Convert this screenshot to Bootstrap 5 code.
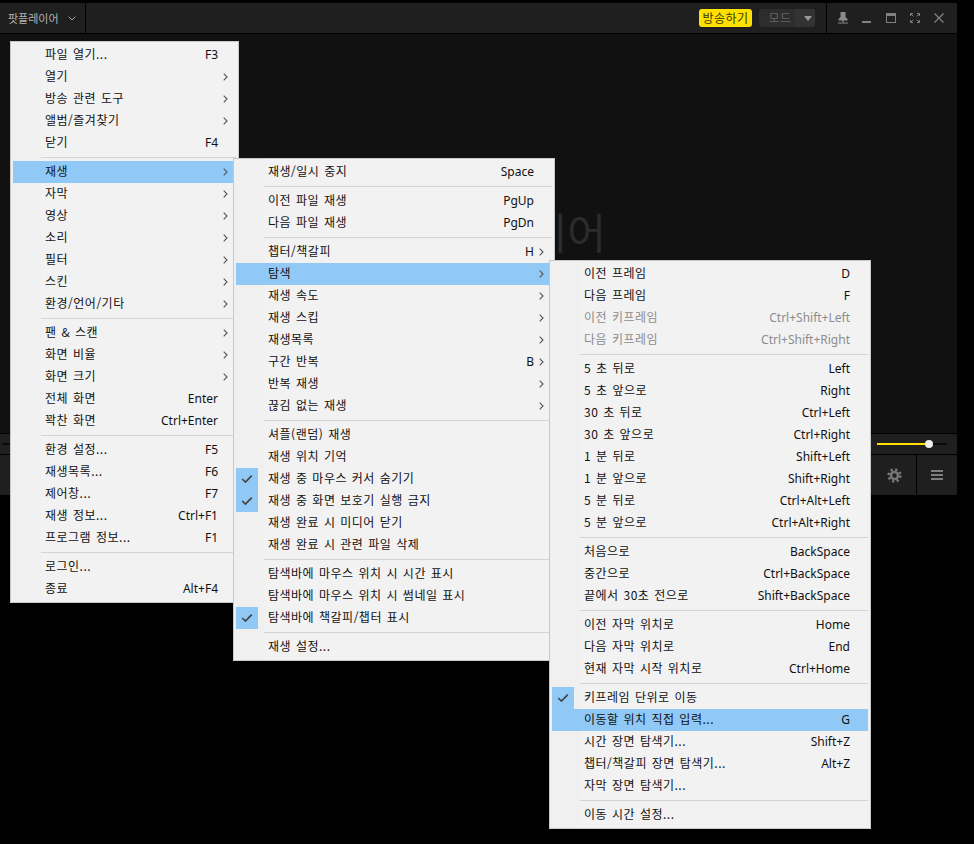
<!doctype html>
<html lang="ko">
<head>
<meta charset="utf-8">
<title>팟플레이어</title>
<link href="https://cdn.jsdelivr.net/npm/bootstrap@5.3.0/dist/css/bootstrap.min.css" rel="stylesheet">
<style>
html,body{background:#000;height:100%;overflow:hidden}
body{font-family:"Noto Sans CJK KR","Noto Sans",sans-serif;font-size:12px;padding-top:3px}
.pp-win{width:957px;background:#111}
.pp-title{height:31px;background:#1f1f1f;border-bottom:1px solid #000}
.pp-brand{width:86px;padding-left:8px;color:#b4b4b4;font-size:11px;border-right:1px solid #000;height:30px}
.pp-brand svg{margin-left:9px}
.pp-live{width:53px;height:18px;border-radius:3px;background:#ffe000;color:#3a3a00;letter-spacing:.4px;line-height:18px;text-align:center;margin-right:7px}
.pp-mode{width:56px;height:18px;border-radius:3px;overflow:hidden;background:#2d2d2d;color:#666;letter-spacing:.4px;margin-right:11px;line-height:18px}
.pp-mode-l{width:36px;text-align:center;padding-left:6px}
.pp-mode-r{width:20px;background:#333;height:18px;padding-left:5px}
.pp-wbtns{height:30px;border-left:1px solid #000;padding-left:4px;padding-right:6px}
.pp-wbtn{width:24px;height:30px;color:#808080}
.pp-stage{height:400px;background:#111;color:#2c2c2c;font-size:42px;line-height:60px;padding-top:167px;padding-right:351px;font-weight:400;border-bottom:1px solid #000}
.pp-seek{height:21px;background:#1f1f1f;border-bottom:1px solid #000}
.pp-track{height:2px;background:#0a0a0a}
.pp-seekline{margin-left:2px;margin-right:20px}
.pp-vol{width:70px;margin-right:10px;position:relative}
.pp-volfill{height:2px;background:#ffe000}
.pp-thumb{position:absolute;top:-3px;width:8px;height:8px;margin-left:-4px;border-radius:50%;background:#eee}
.pp-ctrl{height:40px;background:#1f1f1f}
.pp-cbtn{width:40px;height:40px;padding-right:4px}
.pp-cbtn+.pp-cbtn{width:41px;border-left:1px solid #000;padding-right:0}
.dropdown-menu.pp-menu{position:absolute;display:block;margin:0;min-width:0;padding:2px;border:1px solid #c8c8c8;border-radius:0;background:linear-gradient(to right,#f0f0f0 30px,#f2f2f2 30px);font-size:12px}
.pp-m1{left:10px;top:41px;width:229px;z-index:1010}
.pp-m2{left:233px;top:158px;width:322px;z-index:1020}
.pp-m3{left:549px;top:260px;width:322px;z-index:1030}
.dropdown-item.pp-row{height:22px;line-height:20px;padding:0 0 0 32px;color:#111;letter-spacing:.5px;word-spacing:1px;display:flex;align-items:flex-start;white-space:nowrap}
.dropdown-item.pp-row.pp-on{background:#90c8f6;color:#111}
.dropdown-item.pp-row.pp-off{color:#8c8c8c}
.dropdown-item.pp-row.pp-chk{padding-left:0}
.pp-tick{width:22px;height:22px;background:#90c8f6;margin-right:10px;display:flex;align-items:center;justify-content:center;flex:none}
.pp-key{margin-left:auto;margin-right:18px;font-family:"Noto Sans",sans-serif;letter-spacing:0;font-size:12px;line-height:22px}
.pp-sub{margin-left:auto;width:18px;height:22px;flex:none;display:flex;align-items:center;padding-left:5px}
.pp-key+.pp-sub{margin-left:-18px}
.dropdown-divider.pp-sep{margin:3px 0;height:1px;border-top:1px solid #d4d4d4;opacity:1;margin-left:28px}
</style>
</head>
<body>
<svg width="0" height="0" class="position-absolute">
<symbol id="pp-arr" viewBox="0 0 5 8"><path d="M.7.7 4 4 .7 7.3" fill="none" stroke="#555" stroke-width="1.1"/></symbol>
<symbol id="pp-ok" viewBox="0 0 12 10"><path d="M1.2 5 4.4 8 10.8 1.6" fill="none" stroke="#444" stroke-width="1.7"/></symbol>
</svg>

<div class="pp-win">
  <div class="pp-title d-flex align-items-center">
    <div class="pp-brand d-flex align-items-center">팟플레이어<svg width="8" height="5" viewBox="0 0 8 5"><path d="M.6.6 4 4 7.4.6" fill="none" stroke="#aaa"/></svg></div>
    <div class="ms-auto pp-live">방송하기</div>
    <div class="pp-mode d-flex">
      <div class="pp-mode-l">모드</div>
      <div class="pp-mode-r d-flex align-items-center justify-content-center"><svg width="8" height="5" viewBox="0 0 8 5"><path d="M0 0h8L4 5z" fill="#999"/></svg></div>
    </div>
    <div class="pp-wbtns d-flex">
      <div class="pp-wbtn d-flex align-items-center justify-content-center"><svg width="10" height="12" viewBox="0 0 10 12"><path d="M2.5 0h5v5l2 2v1.5H.5V7l2-2zM4.3 8.5h1.4V10H4.300zM0 10.500h10V11.500H0z" fill="#8a8a8a"/></svg></div>
      <div class="pp-wbtn d-flex align-items-center justify-content-center"><svg width="10" height="12" viewBox="0 0 10 12"><path d="M0 9h9v2H0z" fill="#808080"/></svg></div>
      <div class="pp-wbtn d-flex align-items-center justify-content-center"><svg width="10" height="10" viewBox="0 0 10 10"><path d="M0 0h10v10H0zM1 3v6h8V3z" fill="#808080" fill-rule="evenodd"/></svg></div>
      <div class="pp-wbtn d-flex align-items-center justify-content-center"><svg width="10" height="10" viewBox="0 0 10 10"><path d="M.5 3V.5H3M7 .5h2.500V3M9.500 7v2.500H7M3 9.500H.5V7M1 1l2.300 2.300M9 1 6.700 3.300M9 9 6.700 6.700M1 9l2.300-2.300" fill="none" stroke="#808080"/></svg></div>
      <div class="pp-wbtn d-flex align-items-center justify-content-center"><svg width="10" height="10" viewBox="0 0 10 10"><path d="M.5.5l9 9M9.500.5l-9 9" fill="none" stroke="#808080" stroke-width="1.300"/></svg></div>
    </div>
  </div>
  <div class="pp-stage d-flex justify-content-end align-items-start">팟플레이어</div>
  <div class="pp-seek d-flex align-items-center">
    <div class="pp-track pp-seekline flex-grow-1"></div>
    <div class="pp-track pp-vol"><div class="pp-volfill" style="width:74%"></div><div class="pp-thumb" style="left:74%"></div></div>
  </div>
  <div class="pp-ctrl d-flex justify-content-end">
    <div class="pp-cbtn d-flex align-items-center justify-content-center"><svg width="15" height="15" viewBox="0 0 15 15"><circle cx="7.500" cy="7.500" r="5.900" fill="none" stroke="#757575" stroke-width="2.600" stroke-dasharray="2.300 2.330"/><circle cx="7.500" cy="7.500" r="3.500" fill="none" stroke="#757575" stroke-width="2.600"/></svg></div>
    <div class="pp-cbtn d-flex align-items-center justify-content-center"><svg width="12" height="10" viewBox="0 0 12 10"><path d="M0 1h12M0 5h12M0 9h12" stroke="#ddd"/></svg></div>
  </div>
</div>

<ul class="dropdown-menu pp-menu pp-m1">
  <li><a class="dropdown-item pp-row">파일 열기...<span class="pp-key">F3</span></a></li>
  <li><a class="dropdown-item pp-row">열기<span class="pp-sub"><svg width="5" height="8"><use href="#pp-arr"/></svg></span></a></li>
  <li><a class="dropdown-item pp-row">방송 관련 도구<span class="pp-sub"><svg width="5" height="8"><use href="#pp-arr"/></svg></span></a></li>
  <li><a class="dropdown-item pp-row">앨범/즐겨찾기<span class="pp-sub"><svg width="5" height="8"><use href="#pp-arr"/></svg></span></a></li>
  <li><a class="dropdown-item pp-row">닫기<span class="pp-key">F4</span></a></li>
  <li><hr class="dropdown-divider pp-sep"></li>
  <li><a class="dropdown-item pp-row pp-on">재생<span class="pp-sub"><svg width="5" height="8"><use href="#pp-arr"/></svg></span></a></li>
  <li><a class="dropdown-item pp-row">자막<span class="pp-sub"><svg width="5" height="8"><use href="#pp-arr"/></svg></span></a></li>
  <li><a class="dropdown-item pp-row">영상<span class="pp-sub"><svg width="5" height="8"><use href="#pp-arr"/></svg></span></a></li>
  <li><a class="dropdown-item pp-row">소리<span class="pp-sub"><svg width="5" height="8"><use href="#pp-arr"/></svg></span></a></li>
  <li><a class="dropdown-item pp-row">필터<span class="pp-sub"><svg width="5" height="8"><use href="#pp-arr"/></svg></span></a></li>
  <li><a class="dropdown-item pp-row">스킨<span class="pp-sub"><svg width="5" height="8"><use href="#pp-arr"/></svg></span></a></li>
  <li><a class="dropdown-item pp-row">환경/언어/기타<span class="pp-sub"><svg width="5" height="8"><use href="#pp-arr"/></svg></span></a></li>
  <li><hr class="dropdown-divider pp-sep"></li>
  <li><a class="dropdown-item pp-row">팬 &amp; 스캔<span class="pp-sub"><svg width="5" height="8"><use href="#pp-arr"/></svg></span></a></li>
  <li><a class="dropdown-item pp-row">화면 비율<span class="pp-sub"><svg width="5" height="8"><use href="#pp-arr"/></svg></span></a></li>
  <li><a class="dropdown-item pp-row">화면 크기<span class="pp-sub"><svg width="5" height="8"><use href="#pp-arr"/></svg></span></a></li>
  <li><a class="dropdown-item pp-row">전체 화면<span class="pp-key">Enter</span></a></li>
  <li><a class="dropdown-item pp-row">꽉찬 화면<span class="pp-key">Ctrl+Enter</span></a></li>
  <li><hr class="dropdown-divider pp-sep"></li>
  <li><a class="dropdown-item pp-row">환경 설정...<span class="pp-key">F5</span></a></li>
  <li><a class="dropdown-item pp-row">재생목록...<span class="pp-key">F6</span></a></li>
  <li><a class="dropdown-item pp-row">제어창...<span class="pp-key">F7</span></a></li>
  <li><a class="dropdown-item pp-row">재생 정보...<span class="pp-key">Ctrl+F1</span></a></li>
  <li><a class="dropdown-item pp-row">프로그램 정보...<span class="pp-key">F1</span></a></li>
  <li><hr class="dropdown-divider pp-sep"></li>
  <li><a class="dropdown-item pp-row">로그인...</a></li>
  <li><a class="dropdown-item pp-row">종료<span class="pp-key">Alt+F4</span></a></li>
</ul>

<ul class="dropdown-menu pp-menu pp-m2">
  <li><a class="dropdown-item pp-row">재생/일시 중지<span class="pp-key">Space</span></a></li>
  <li><hr class="dropdown-divider pp-sep"></li>
  <li><a class="dropdown-item pp-row">이전 파일 재생<span class="pp-key">PgUp</span></a></li>
  <li><a class="dropdown-item pp-row">다음 파일 재생<span class="pp-key">PgDn</span></a></li>
  <li><hr class="dropdown-divider pp-sep"></li>
  <li><a class="dropdown-item pp-row">챕터/책갈피<span class="pp-key">H</span><span class="pp-sub"><svg width="5" height="8"><use href="#pp-arr"/></svg></span></a></li>
  <li><a class="dropdown-item pp-row pp-on">탐색<span class="pp-sub"><svg width="5" height="8"><use href="#pp-arr"/></svg></span></a></li>
  <li><a class="dropdown-item pp-row">재생 속도<span class="pp-sub"><svg width="5" height="8"><use href="#pp-arr"/></svg></span></a></li>
  <li><a class="dropdown-item pp-row">재생 스킵<span class="pp-sub"><svg width="5" height="8"><use href="#pp-arr"/></svg></span></a></li>
  <li><a class="dropdown-item pp-row">재생목록<span class="pp-sub"><svg width="5" height="8"><use href="#pp-arr"/></svg></span></a></li>
  <li><a class="dropdown-item pp-row">구간 반복<span class="pp-key">B</span><span class="pp-sub"><svg width="5" height="8"><use href="#pp-arr"/></svg></span></a></li>
  <li><a class="dropdown-item pp-row">반복 재생<span class="pp-sub"><svg width="5" height="8"><use href="#pp-arr"/></svg></span></a></li>
  <li><a class="dropdown-item pp-row">끊김 없는 재생<span class="pp-sub"><svg width="5" height="8"><use href="#pp-arr"/></svg></span></a></li>
  <li><hr class="dropdown-divider pp-sep"></li>
  <li><a class="dropdown-item pp-row">셔플(랜덤) 재생</a></li>
  <li><a class="dropdown-item pp-row">재생 위치 기억</a></li>
  <li><a class="dropdown-item pp-row pp-chk"><span class="pp-tick"><svg width="12" height="10"><use href="#pp-ok"/></svg></span>재생 중 마우스 커서 숨기기</a></li>
  <li><a class="dropdown-item pp-row pp-chk"><span class="pp-tick"><svg width="12" height="10"><use href="#pp-ok"/></svg></span>재생 중 화면 보호기 실행 금지</a></li>
  <li><a class="dropdown-item pp-row">재생 완료 시 미디어 닫기</a></li>
  <li><a class="dropdown-item pp-row">재생 완료 시 관련 파일 삭제</a></li>
  <li><hr class="dropdown-divider pp-sep"></li>
  <li><a class="dropdown-item pp-row">탐색바에 마우스 위치 시 시간 표시</a></li>
  <li><a class="dropdown-item pp-row">탐색바에 마우스 위치 시 썸네일 표시</a></li>
  <li><a class="dropdown-item pp-row pp-chk"><span class="pp-tick"><svg width="12" height="10"><use href="#pp-ok"/></svg></span>탐색바에 책갈피/챕터 표시</a></li>
  <li><hr class="dropdown-divider pp-sep"></li>
  <li><a class="dropdown-item pp-row">재생 설정...</a></li>
</ul>

<ul class="dropdown-menu pp-menu pp-m3">
  <li><a class="dropdown-item pp-row">이전 프레임<span class="pp-key">D</span></a></li>
  <li><a class="dropdown-item pp-row">다음 프레임<span class="pp-key">F</span></a></li>
  <li><a class="dropdown-item pp-row pp-off">이전 키프레임<span class="pp-key">Ctrl+Shift+Left</span></a></li>
  <li><a class="dropdown-item pp-row pp-off">다음 키프레임<span class="pp-key">Ctrl+Shift+Right</span></a></li>
  <li><hr class="dropdown-divider pp-sep"></li>
  <li><a class="dropdown-item pp-row">5 초 뒤로<span class="pp-key">Left</span></a></li>
  <li><a class="dropdown-item pp-row">5 초 앞으로<span class="pp-key">Right</span></a></li>
  <li><a class="dropdown-item pp-row">30 초 뒤로<span class="pp-key">Ctrl+Left</span></a></li>
  <li><a class="dropdown-item pp-row">30 초 앞으로<span class="pp-key">Ctrl+Right</span></a></li>
  <li><a class="dropdown-item pp-row">1 분 뒤로<span class="pp-key">Shift+Left</span></a></li>
  <li><a class="dropdown-item pp-row">1 분 앞으로<span class="pp-key">Shift+Right</span></a></li>
  <li><a class="dropdown-item pp-row">5 분 뒤로<span class="pp-key">Ctrl+Alt+Left</span></a></li>
  <li><a class="dropdown-item pp-row">5 분 앞으로<span class="pp-key">Ctrl+Alt+Right</span></a></li>
  <li><hr class="dropdown-divider pp-sep"></li>
  <li><a class="dropdown-item pp-row">처음으로<span class="pp-key">BackSpace</span></a></li>
  <li><a class="dropdown-item pp-row">중간으로<span class="pp-key">Ctrl+BackSpace</span></a></li>
  <li><a class="dropdown-item pp-row">끝에서 30초 전으로<span class="pp-key">Shift+BackSpace</span></a></li>
  <li><hr class="dropdown-divider pp-sep"></li>
  <li><a class="dropdown-item pp-row">이전 자막 위치로<span class="pp-key">Home</span></a></li>
  <li><a class="dropdown-item pp-row">다음 자막 위치로<span class="pp-key">End</span></a></li>
  <li><a class="dropdown-item pp-row">현재 자막 시작 위치로<span class="pp-key">Ctrl+Home</span></a></li>
  <li><hr class="dropdown-divider pp-sep"></li>
  <li><a class="dropdown-item pp-row pp-chk"><span class="pp-tick"><svg width="12" height="10"><use href="#pp-ok"/></svg></span>키프레임 단위로 이동</a></li>
  <li><a class="dropdown-item pp-row pp-on">이동할 위치 직접 입력...<span class="pp-key">G</span></a></li>
  <li><a class="dropdown-item pp-row">시간 장면 탐색기...<span class="pp-key">Shift+Z</span></a></li>
  <li><a class="dropdown-item pp-row">챕터/책갈피 장면 탐색기...<span class="pp-key">Alt+Z</span></a></li>
  <li><a class="dropdown-item pp-row">자막 장면 탐색기...</a></li>
  <li><hr class="dropdown-divider pp-sep"></li>
  <li><a class="dropdown-item pp-row">이동 시간 설정...</a></li>
</ul>
<script src="https://cdn.jsdelivr.net/npm/bootstrap@5.3.0/dist/js/bootstrap.bundle.min.js"></script>
</body>
</html>
